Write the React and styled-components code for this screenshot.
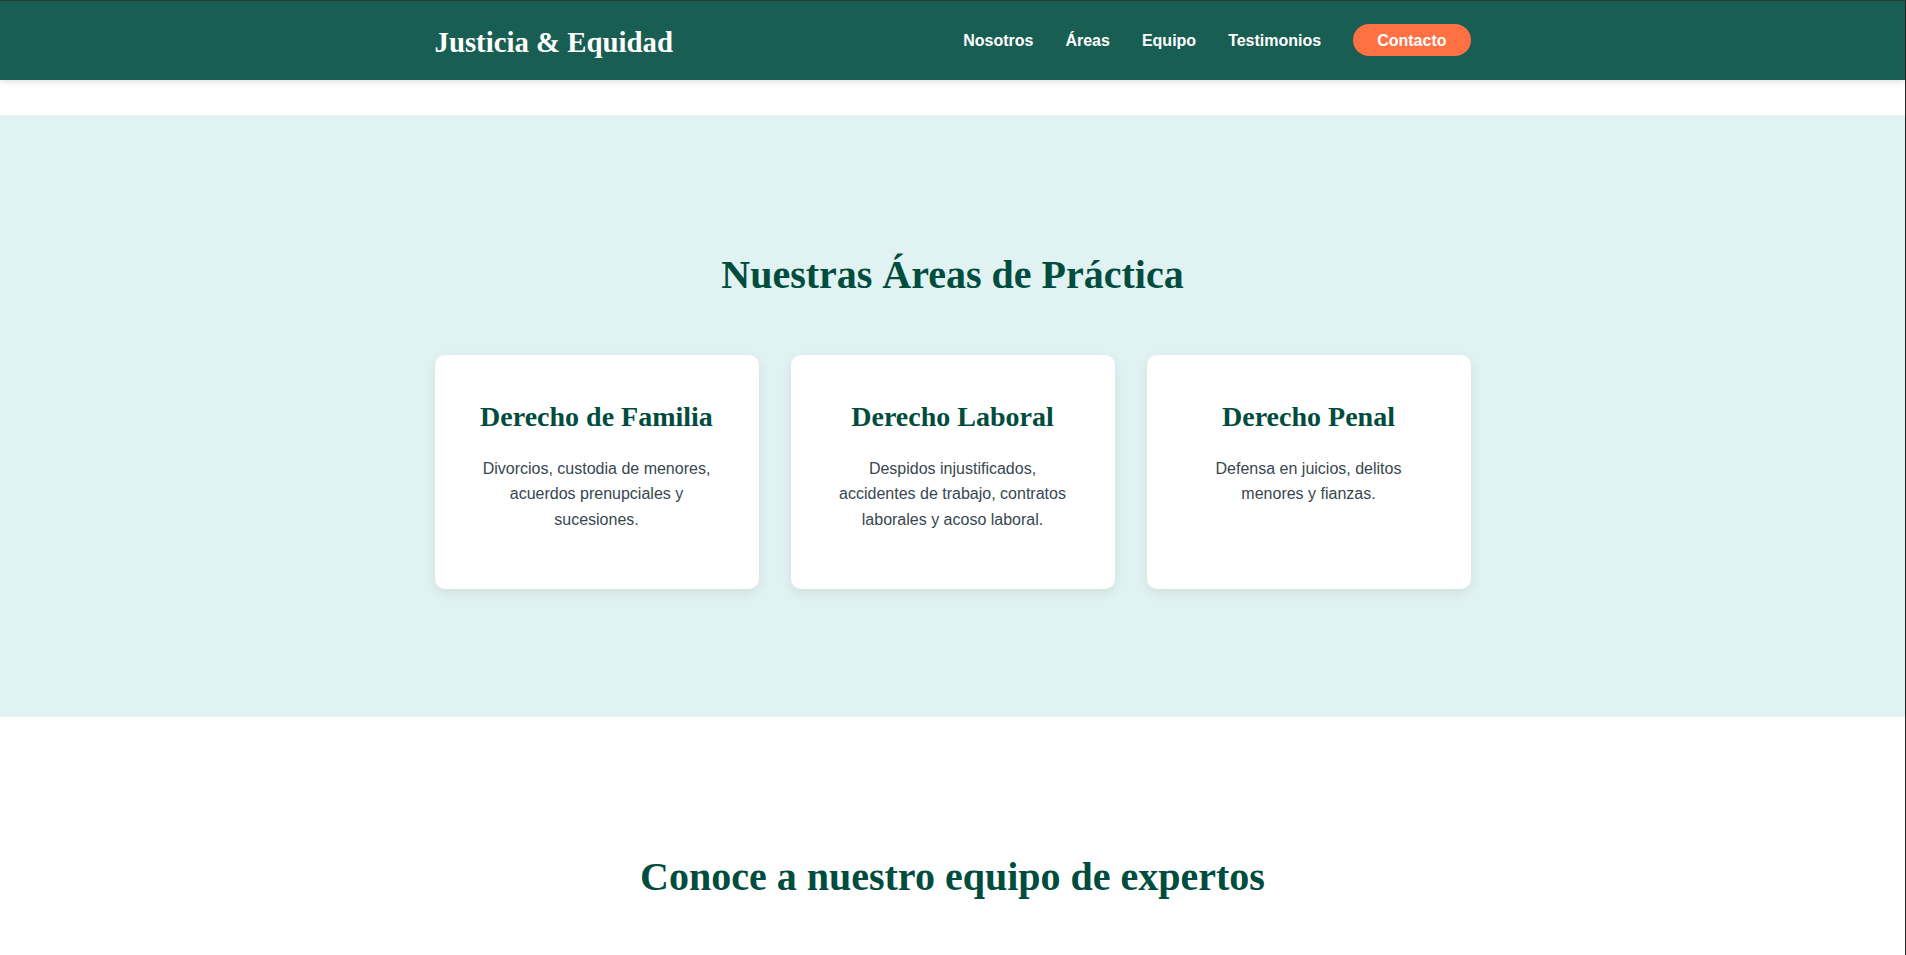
import React from "react";
import styled, { createGlobalStyle } from "styled-components";

const GlobalStyle = createGlobalStyle`
  html, body {
    margin: 0;
    padding: 0;
    overflow: hidden;
  }
  body {
    font-family: "Liberation Sans", Arial, sans-serif;
    line-height: 1.6;
    color: #37474f;
    background: #ffffff;
  }
  * {
    box-sizing: border-box;
  }
`;

export const Page = styled.div`
  min-height: 100vh;
  border-top: 1px solid #2f3a33;
  border-right: 1px solid #242424;
`;

export const Header = styled.header`
  height: 79px;
  background-color: rgba(0, 77, 64, 0.9);
  box-shadow: 0 2px 6px rgba(0, 0, 0, 0.12);
  display: flex;
  align-items: center;
`;

export const Container = styled.div`
  width: 100%;
  max-width: 1100px;
  margin: 0 auto;
  padding: 0 2rem;
`;

export const HeaderInner = styled(Container)`
  display: flex;
  align-items: center;
  justify-content: space-between;
`;

export const Logo = styled.a`
  font-family: "Liberation Serif", "Times New Roman", serif;
  font-weight: 700;
  font-size: 1.8rem;
  color: #ffffff;
  text-decoration: none;
  line-height: 1.2;
  margin-top: 3px;
`;

export const Nav = styled.nav`
  display: flex;
  align-items: center;
  gap: 2rem;
`;

export const NavLink = styled.a`
  color: #ffffff;
  font-weight: 700;
  font-size: 16px;
  text-decoration: none;
`;

export const ContactButton = styled.a`
  background-color: #ff7043;
  color: #ffffff;
  font-weight: 700;
  font-size: 16px;
  line-height: 16px;
  padding: 9px 24px 7px;
  border-radius: 20px;
  text-decoration: none;
`;

export const Section = styled.section`
  background-color: ${(p) => (p.$tinted ? "#e0f2f1" : "#ffffff")};
  padding: 128px 0;
  margin-top: ${(p) => (p.$first ? "35px" : "0")};
`;

export const SectionTitle = styled.h2`
  font-family: "Liberation Serif", "Times New Roman", serif;
  font-weight: 700;
  font-size: 2.5rem;
  color: #004d40;
  text-align: center;
  margin: 0 0 3rem;
`;

export const CardGrid = styled.div`
  display: grid;
  grid-template-columns: repeat(3, 1fr);
  gap: 2rem;
`;

export const Card = styled.div`
  background: #ffffff;
  border-radius: 10px;
  padding: 2.5rem;
  text-align: center;
  box-shadow: 0 4px 12px rgba(0, 0, 0, 0.08);
`;

export const CardTitle = styled.h3`
  font-family: "Liberation Serif", "Times New Roman", serif;
  font-weight: 700;
  font-size: 28px;
  color: #004d40;
  margin: 0 0 1rem;
`;

export const CardText = styled.p`
  font-size: 16px;
  margin: 0 0 1rem;
  color: #37474f;
`;

const areas = [
  {
    title: "Derecho de Familia",
    text: "Divorcios, custodia de menores, acuerdos prenupciales y sucesiones.",
  },
  {
    title: "Derecho Laboral",
    text: "Despidos injustificados, accidentes de trabajo, contratos laborales y acoso laboral.",
  },
  {
    title: "Derecho Penal",
    text: "Defensa en juicios, delitos menores y fianzas.",
  },
];

export default function App() {
  return (
    <Page>
      <GlobalStyle />
      <Header>
        <HeaderInner>
          <Logo href="#">Justicia &amp; Equidad</Logo>
          <Nav>
            <NavLink href="#nosotros">Nosotros</NavLink>
            <NavLink href="#areas">Áreas</NavLink>
            <NavLink href="#equipo">Equipo</NavLink>
            <NavLink href="#testimonios">Testimonios</NavLink>
            <ContactButton href="#contacto">Contacto</ContactButton>
          </Nav>
        </HeaderInner>
      </Header>

      <Section id="areas" $tinted $first>
        <Container>
          <SectionTitle>Nuestras Áreas de Práctica</SectionTitle>
          <CardGrid>
            {areas.map((a) => (
              <Card key={a.title}>
                <CardTitle>{a.title}</CardTitle>
                <CardText>{a.text}</CardText>
              </Card>
            ))}
          </CardGrid>
        </Container>
      </Section>

      <Section id="equipo">
        <Container>
          <SectionTitle>Conoce a nuestro equipo de expertos</SectionTitle>
        </Container>
      </Section>
    </Page>
  );
}
